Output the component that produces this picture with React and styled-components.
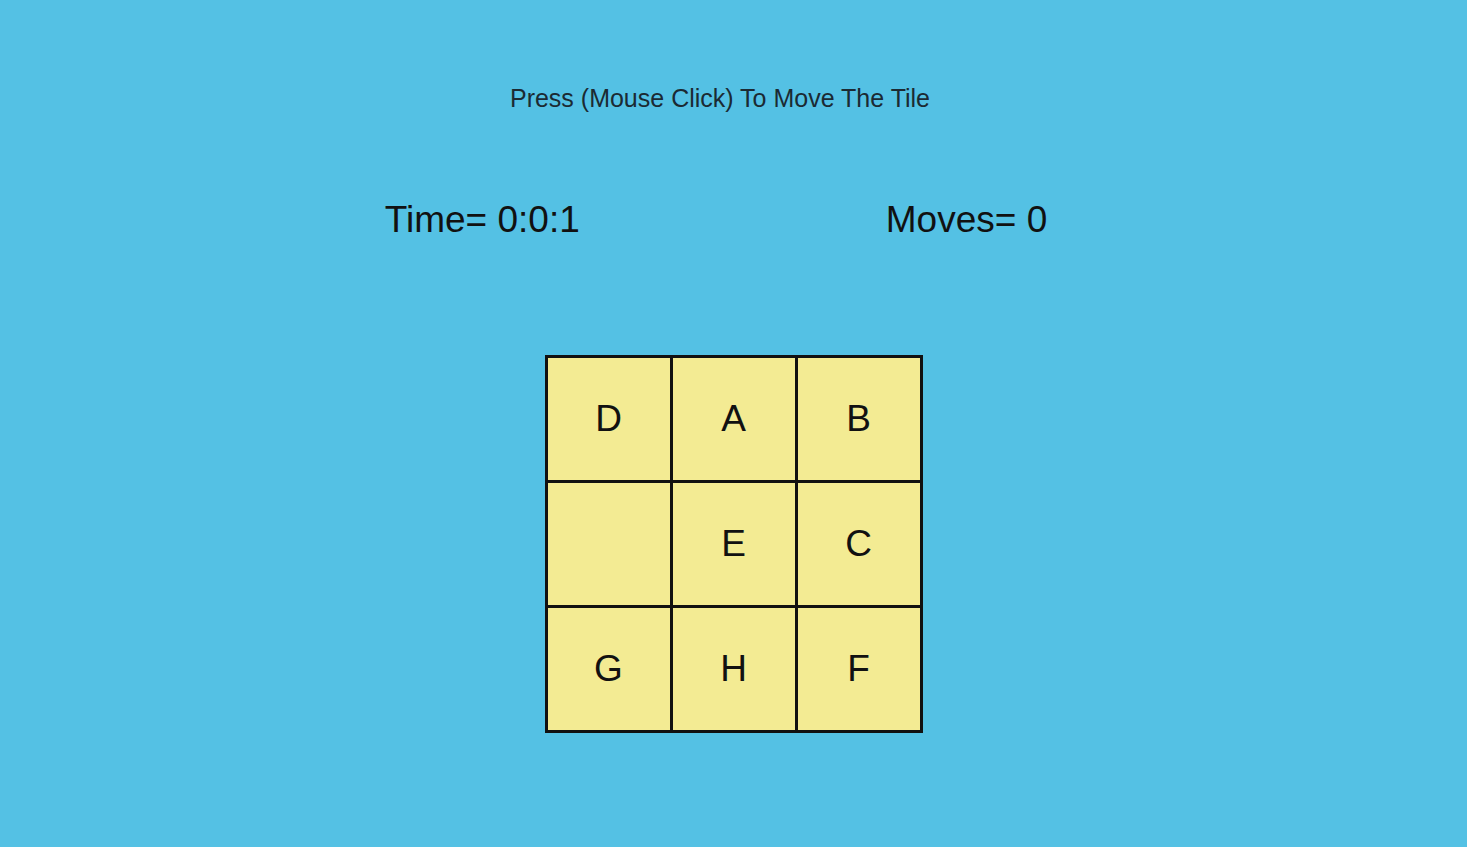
import React from "react";
import styled, { createGlobalStyle } from "styled-components";

const Global = createGlobalStyle`
  html, body { margin: 0; padding: 0; }
  body {
    background: #54c1e4;
    font-family: "Liberation Sans", Arial, sans-serif;
    color: #111;
  }
`;

const Page = styled.div`
  width: 100%;
  height: 847px;
  display: flex;
  flex-direction: column;
  align-items: center;
  overflow: hidden;
`;

const Title = styled.div`
  margin-top: 83px;
  padding-right: 27px;
  font-size: 25px;
  color: #1b2a33;
  line-height: 30px;
`;

const Stats = styled.div`
  margin-top: 86px;
  display: flex;
  gap: 306px;
  padding-right: 35px;
  font-size: 37px;
  line-height: 42px;
  color: #111;
`;

const Board = styled.div`
  margin-top: 114px;
  display: grid;
  grid-template-columns: repeat(3, 122px);
  grid-template-rows: repeat(3, 122px);
  gap: 3px;
  padding: 3px;
  background: #111;
`;

const Tile = styled.div`
  background: #f3eb93;
  display: flex;
  align-items: center;
  justify-content: center;
  font-size: 37px;
  color: #111;
  cursor: ${(p) => (p.$empty ? "default" : "pointer")};
`;

const tiles = ["D", "A", "B", "", "E", "C", "G", "H", "F"];

export default function App() {
  return (
    <Page>
      <Global />
      <Title>Press (Mouse Click) To Move The Tile</Title>
      <Stats>
        <span>Time= 0:0:1</span>
        <span>Moves= 0</span>
      </Stats>
      <Board>
        {tiles.map((t, i) => (
          <Tile key={i} $empty={!t}>
            {t}
          </Tile>
        ))}
      </Board>
    </Page>
  );
}
